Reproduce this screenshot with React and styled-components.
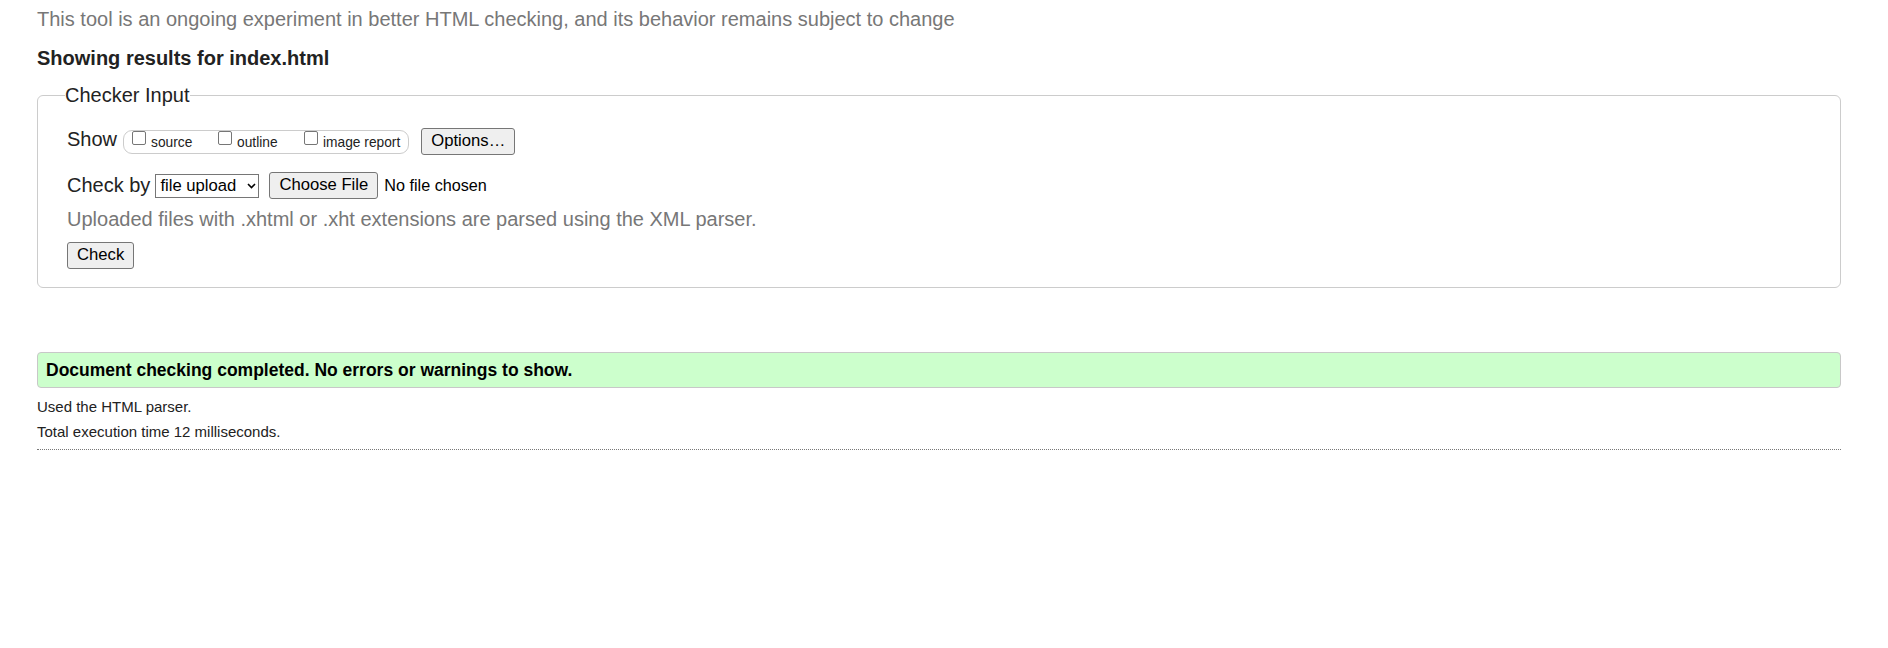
import React from 'react';
import styled, { createGlobalStyle } from 'styled-components';

const GlobalStyle = createGlobalStyle`
  html, body { margin: 0; padding: 0; background: #fff; }
  body {
    font-family: "Liberation Sans", Arial, Helvetica, sans-serif;
    color: #222;
  }
  * { box-sizing: border-box; }
`;

const Page = styled.main`
  padding: 8px 47px 40px 37px;
`;

const Notice = styled.p`
  margin: 0;
  font-size: 20px;
  line-height: 23px;
  color: #777;
`;

const ResultsHeading = styled.h2`
  margin: 16px 0 0;
  font-size: 20px;
  line-height: 23px;
  font-weight: bold;
  color: #222;
`;

const CheckerFieldset = styled.fieldset`
  margin: 14px 0 0;
  padding: 21px 28px 18px 29px;
  border: 1px solid #ccc;
  border-radius: 6px;
  min-width: 0;
`;

const Legend = styled.legend`
  padding: 0;
  margin-left: -2px;
  font-size: 20px;
  line-height: 23px;
  color: #222;
`;

const Row = styled.div`
  display: flex;
  align-items: center;
  height: 27px;
  margin-top: ${(p) => p.$mt || 0}px;
`;

const RowLabel = styled.span`
  font-size: 20px;
  line-height: 23px;
  color: #222;
  margin-right: ${(p) => p.$gap}px;
  margin-bottom: ${(p) => p.$lift || 0}px;
`;

const ShowOptions = styled.span`
  display: inline-flex;
  align-items: flex-start;
  height: 24px;
  padding: 0 8px 0 8px;
  border: 1px solid #ccc;
  border-radius: 9px;
`;

const OptionLabel = styled.label`
  display: inline-flex;
  align-items: flex-start;
  width: ${(p) => (p.$width ? `${p.$width}px` : 'auto')};
  font-size: 13.75px;
  line-height: 16px;
  color: #222;
`;

const Checkbox = styled.input.attrs({ type: 'checkbox' })`
  appearance: none;
  -webkit-appearance: none;
  flex-shrink: 0;
  width: 14px;
  height: 14px;
  margin: 0 5px 0 0;
  border: 1px solid #767676;
  border-radius: 2px;
  background: #fff;
`;

const OptionText = styled.span`
  padding-top: 4px;
  white-space: nowrap;
`;

const Button = styled.button`
  display: inline-flex;
  align-items: center;
  height: 27px;
  margin: 0 ${(p) => p.$mr || 0}px 0 ${(p) => p.$ml || 0}px;
  padding: 0 9px;
  font-family: "Liberation Sans", Arial, Helvetica, sans-serif;
  font-size: 16.67px;
  line-height: 1;
  color: #000;
  background: #efefef;
  border: 1px solid #767676;
  border-radius: 3px;
`;

const BlockButton = styled(Button)`
  display: flex;
  margin-top: 11px;
`;

const SelectBox = styled.span`
  display: inline-flex;
  align-items: center;
  width: 104px;
  height: 24px;
  margin-right: 10px;
  padding: 0 2px 0 4px;
  border: 1px solid #767676;
  background: #fff;
`;

const NativeSelect = styled.select`
  appearance: none;
  -webkit-appearance: none;
  flex: 1;
  min-width: 0;
  margin: 0;
  padding: 0;
  border: none;
  outline: none;
  background: transparent;
  font-family: "Liberation Sans", Arial, Helvetica, sans-serif;
  font-size: 16.67px;
  color: #000;
`;

const FileStatus = styled.span`
  font-size: 16.2px;
  color: #000;
`;

const Hint = styled.p`
  margin: 9px 0 0;
  font-size: 20px;
  line-height: 23px;
  color: #777;
`;

const SuccessBox = styled.div`
  margin-top: 64px;
  height: 36px;
  padding: 7px 8px;
  border: 1px solid #c8c8c8;
  border-radius: 4px;
  background: #ccffcc;
  font-size: 17.5px;
  line-height: 20px;
  font-weight: bold;
  color: #000;
`;

const Details = styled.div`
  padding-bottom: 9px;
  border-bottom: 1px dotted #777;
`;

const DetailLine = styled.p`
  margin: ${(p) => p.$mt}px 0 0;
  font-size: 15px;
  line-height: 17px;
  color: #222;
`;

function Chevron() {
  return (
    <svg width="9" height="6" viewBox="0 0 9 6" aria-hidden="true">
      <path d="M1 1 L4.5 4.5 L8 1" fill="none" stroke="#000" strokeWidth="1.6" />
    </svg>
  );
}

export default function App() {
  return (
    <>
      <GlobalStyle />
      <Page>
        <Notice>
          This tool is an ongoing experiment in better HTML checking, and its behavior remains subject to change
        </Notice>
        <ResultsHeading>Showing results for index.html</ResultsHeading>

        <CheckerFieldset>
          <Legend>Checker Input</Legend>
          <Row>
            <RowLabel $gap={6} $lift={4}>Show</RowLabel>
            <ShowOptions>
              <OptionLabel $width={86}>
                <Checkbox />
                <OptionText>source</OptionText>
              </OptionLabel>
              <OptionLabel $width={86}>
                <Checkbox />
                <OptionText>outline</OptionText>
              </OptionLabel>
              <OptionLabel>
                <Checkbox />
                <OptionText>image report</OptionText>
              </OptionLabel>
            </ShowOptions>
            <Button type="button" $ml={12}>Options…</Button>
          </Row>
          <Row $mt={17}>
            <RowLabel $gap={5} $lift={1}>Check by</RowLabel>
            <SelectBox>
              <NativeSelect defaultValue="file">
                <option value="file">file upload</option>
                <option value="address">address</option>
                <option value="text">text input</option>
              </NativeSelect>
              <Chevron />
            </SelectBox>
            <Button type="button" $mr={6}>Choose File</Button>
            <FileStatus>No file chosen</FileStatus>
          </Row>
          <Hint>Uploaded files with .xhtml or .xht extensions are parsed using the XML parser.</Hint>
          <BlockButton type="button">Check</BlockButton>
        </CheckerFieldset>

        <SuccessBox>Document checking completed. No errors or warnings to show.</SuccessBox>
        <Details>
          <DetailLine $mt={10}>Used the HTML parser.</DetailLine>
          <DetailLine $mt={8}>Total execution time 12 milliseconds.</DetailLine>
        </Details>
      </Page>
    </>
  );
}
